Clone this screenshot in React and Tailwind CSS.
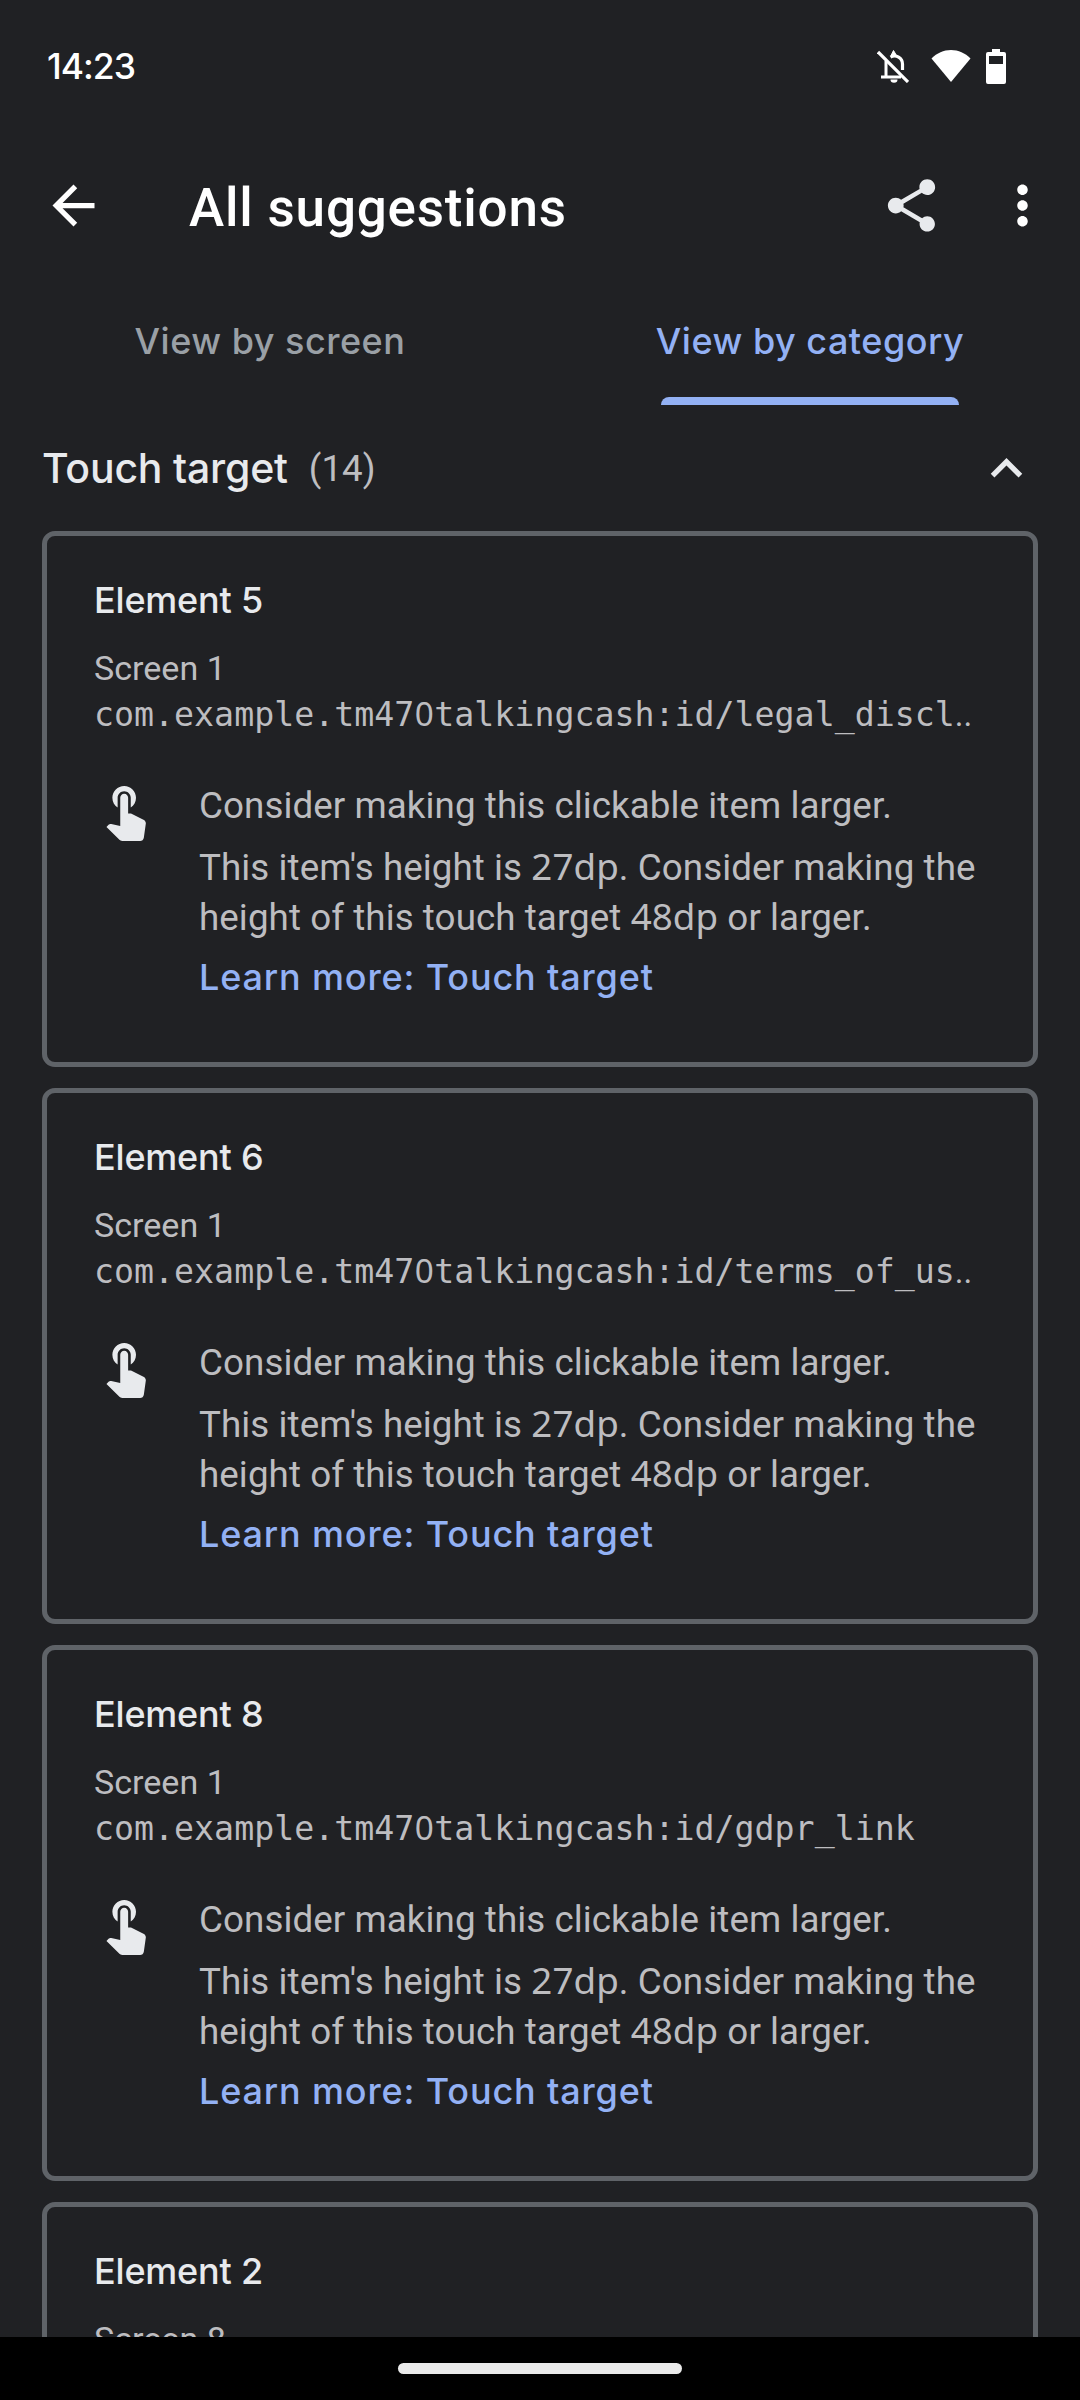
import React from "react";

const CARDS = [
  { title: "Element 5", screen: "Screen 1", id: ["com.example.tm47", "talkingcash:id/legal_discl"], cut: true },
  { title: "Element 6", screen: "Screen 1", id: ["com.example.tm47", "talkingcash:id/terms_of_us"], cut: true },
  { title: "Element 8", screen: "Screen 1", id: ["com.example.tm47", "talkingcash:id/gdpr_link"], cut: false },
  { title: "Element 2", screen: "Screen 8" },
];

function Icon({ d, className }) {
  return (
    <svg viewBox="0 0 24 24" fill="currentColor" className={className}>
      <path d={d} />
    </svg>
  );
}

function StatusBar() {
  return (
    <div className="flex h-[132px] shrink-0 items-center pl-[47px] pr-[74px] text-white">
      <span className="pt-[2px] font-['Inter'] text-[35.5px] font-medium leading-none tracking-[-1px]">14:23</span>
      <div className="ml-auto flex items-center">
        <svg viewBox="0 0 32 33" className="h-[33px] w-[32px]" fill="none" stroke="currentColor">
          <path d="M9 11V27M4 27H24" strokeWidth="3" />
          <path d="M13.500 7.200C19 4 25.500 8 25.500 14V20" strokeWidth="3.200" />
          <path d="M14 5.500L16.500 0.500L19.500 5.500z" fill="currentColor" strokeWidth="1" />
          <path d="M13.500 29.500h7a3.500 3.200 0 0 1-7 0z" fill="currentColor" stroke="none" />
          <path d="M1 2L31 32" strokeWidth="3.200" />
        </svg>
        <svg viewBox="0 0 40 34" className="ml-[22px] h-[34px] w-[40px]" fill="currentColor">
          <path d="M20 33L.500 9.500C6 4 12.500 1 20 1s14 3 19.500 8.500z" />
        </svg>
        <svg viewBox="0 0 20 35" className="ml-[15px] h-[35px] w-[20px]" fill="currentColor" fillRule="evenodd">
          <path d="M6 0h8v3h4a2 2 0 0 1 2 2v28a2 2 0 0 1-2 2H2a2 2 0 0 1-2-2V5a2 2 0 0 1 2-2h4zM3 7v8h14V7z" />
        </svg>
      </div>
    </div>
  );
}

function AppBar() {
  return (
    <div className="flex h-[147px] shrink-0 items-center pl-[42px] pr-[26px] text-white">
      <Icon className="size-[63px]" d="M20 11H7.830l5.590-5.590L12 4l-8 8 8 8 1.410-1.410L7.830 13H20v-2z" />
      <h1 className="ml-[84px] pt-[5px] font-['Roboto'] text-[53px] font-medium leading-none tracking-[0.8px]">
        All suggestions
      </h1>
      <Icon
        className="ml-auto size-[63px] text-[#e8eaed]"
        d="M18 16.080c-.76 0-1.440.3-1.960.77L8.910 12.700c.05-.23.09-.46.09-.7s-.04-.47-.09-.7l7.050-4.110c.54.5 1.250.81 2.040.81 1.660 0 3-1.340 3-3s-1.340-3-3-3-3 1.340-3 3c0 .24.04.47.09.7L8.040 9.810C7.500 9.310 6.790 9 6 9c-1.660 0-3 1.340-3 3s1.340 3 3 3c.79 0 1.500-.31 2.040-.81l7.120 4.160c-.05.21-.08.43-.08.65 0 1.610 1.310 2.920 2.920 2.920s2.920-1.310 2.920-2.920-1.310-2.920-2.920-2.920z"
      />
      <Icon
        className="ml-[48px] size-[63px]"
        d="M12 8c1.100 0 2-.9 2-2s-.9-2-2-2-2 .9-2 2 .9 2 2 2zm0 2c-1.100 0-2 .9-2 2s.9 2 2 2 2-.9 2-2-.9-2-2-2zm0 6c-1.100 0-2 .9-2 2s.9 2 2 2 2-.9 2-2-.9-2-2-2z"
      />
    </div>
  );
}

function Tabs() {
  return (
    <div className="grid h-[126px] shrink-0 grid-cols-2 font-['Inter'] text-[36px] font-medium leading-[44px] tracking-[0.5px]">
      <div className="flex justify-center pt-[40px] text-[#9aa0a6]">
        <span>View by screen</span>
      </div>
      <div className="flex flex-col items-center pt-[40px] text-[#93b1f4]">
        <span>View by category</span>
        <div className="mt-auto h-[8px] w-[298px] rounded-t-[8px] bg-[#93b1f4]" />
      </div>
    </div>
  );
}

function ResourceId({ id, cut }) {
  return (
    <p className="whitespace-nowrap font-['DejaVu_Sans_Mono'] text-[33.25px] leading-[46px]">
      {id[0]}
      <span className="inline-block w-[20px] text-center font-['Noto_Sans']">0</span>
      {id[1]}
      {cut && <span className="font-['Roboto'] leading-none">..</span>}
    </p>
  );
}

function Suggestion() {
  return (
    <div className="mt-[43px] flex">
      <Icon
        className="mt-[-3px] size-[63px] shrink-0 text-[#e8eaed]"
        d="M9 11.240V7.500C9 6.120 10.120 5 11.500 5S14 6.120 14 7.500v3.740c1.210-.81 2-2.180 2-3.740C16 5.010 13.990 3 11.500 3S7 5.010 7 7.500c0 1.560.79 2.930 2 3.740zm9.840 4.630l-4.540-2.260c-.17-.07-.35-.11-.54-.11H13v-6c0-.83-.67-1.500-1.500-1.500S10 6.670 10 7.500v10.740l-3.430-.72c-.08-.01-.15-.03-.24-.03-.31 0-.59.13-.79.33l-.79.8 4.940 4.940c.27.27.65.44 1.060.44h6.790c.75 0 1.330-.55 1.440-1.280l.75-5.270c.01-.07.02-.14.02-.2 0-.62-.38-1.160-.91-1.380z"
      />
      <div className="ml-[42px] whitespace-nowrap text-[36.75px] leading-[50px] tracking-[0.07px]">
        <p>Consider making this clickable item larger.</p>
        <p className="mt-[12px]">
          This item's height is <span className="font-['Noto_Sans'] leading-none">27dp</span>. Consider making the
          <br />
          height of this touch target <span className="font-['Noto_Sans'] leading-none">48dp</span> or larger.
        </p>
        <p className="mt-[9px] font-['Inter'] text-[36px] font-medium tracking-[0.85px] text-[#93b1f4]">
          Learn more: Touch target
        </p>
      </div>
    </div>
  );
}

function Card({ title, screen, id, cut }) {
  return (
    <article className="h-[536px] shrink-0 rounded-[13px] border-[5px] border-[#5f6368] pl-[47px] pr-[42px] pt-[42px] font-['Roboto'] text-[#bdbdc0]">
      <h2 className="font-['Inter'] text-[36px] font-medium leading-[44px] tracking-[-0.2px] text-[#e8eaed]">{title}</h2>
      <p className="mt-[26px] text-[34.1px] leading-[40px]">{screen}</p>
      {id && (
        <div className="mt-[2px]">
          <ResourceId id={id} cut={cut} />
          <Suggestion />
        </div>
      )}
    </article>
  );
}

export default function App() {
  return (
    <div className="flex h-[2400px] w-[1080px] flex-col overflow-hidden bg-[#202124]">
      <StatusBar />
      <AppBar />
      <Tabs />
      <main className="flex min-h-0 flex-1 flex-col overflow-hidden">
        <div className="flex h-[126px] shrink-0 items-center pl-[42px] pr-[42px]">
          <h2 className="font-['Inter'] text-[41px] font-medium leading-none tracking-[-0.2px] text-[#e8eaed]">
            Touch target
          </h2>
          <span className="ml-[21px] pt-[3px] font-['Roboto'] text-[36.75px] leading-none text-[#bdbdc0]">(14)</span>
          <Icon className="ml-auto size-[63px] text-[#e8eaed]" d="M12 8l-6 6 1.410 1.410L12 10.830l4.590 4.580L18 14z" />
        </div>
        <div className="flex flex-col gap-[21px] px-[42px]">
          {CARDS.map((card) => (
            <Card key={card.title} {...card} />
          ))}
        </div>
      </main>
      <div className="flex h-[63px] shrink-0 items-center justify-center bg-black">
        <div className="h-[11px] w-[284px] rounded-full bg-[#eaeaea]" />
      </div>
    </div>
  );
}
